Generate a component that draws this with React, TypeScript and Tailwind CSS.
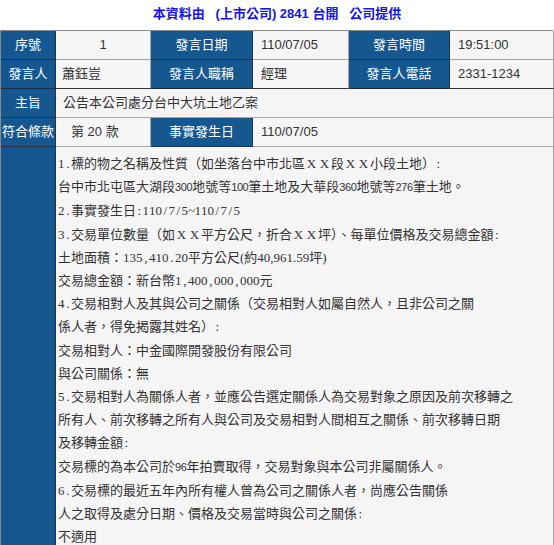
import React from "react";

const BLUE = "bg-[#17578f] text-white border-r border-b border-[#1d3550]";
const CELL = "bg-[#f5f5f5] text-[#333] border-r border-b border-[#a6a6a6]";

function X() {
  return <span className="inline-block w-[13px] text-center" style={{ fontFamily: '"Liberation Serif", serif' }}>X</span>;
}

function N({ children }: { children: React.ReactNode }) {
  return <span className="text-[11px] tracking-[-0.4px]" style={{ fontFamily: '"Liberation Sans", sans-serif' }}>{children}</span>;
}

function M({ s }: { s: string }) {
  const out: React.ReactNode[] = [];
  let buf = "";
  const flush = (k: number) => {
    if (buf) {
      out.push(<span key={"t" + k}>{buf}</span>);
      buf = "";
    }
  };
  Array.from(s).forEach((ch, i) => {
    if (ch.charCodeAt(0) < 128) {
      flush(i);
      out.push(
        <span key={i} className="inline-block w-[6.5px] text-center" style={{ fontFamily: '"Liberation Serif", serif' }}>
          {ch === " " ? "\u00a0" : ch}
        </span>
      );
    } else {
      buf += ch;
    }
  });
  flush(s.length + 1);
  return <>{out}</>;
}

export default function App() {
  const sans = '"Liberation Sans", "Noto Sans CJK TC", sans-serif';
  const body = '"Liberation Serif", "Noto Sans CJK TC", serif';
  const lines: React.ReactNode[] = [
    <><M s="1." />標的物之名稱及性質（如坐落台中市北區<X /><X />段<X /><X />小段土地）<M s=":" /></>,
    <>台中市北屯區大湖段<N>300</N>地號等<N>100</N>筆土地及大華段<N>360</N>地號等<N>276</N>筆土地。</>,
    <M s="2.事實發生日:110/7/5~110/7/5" />,
    <><M s="3." />交易單位數量（如<X /><X />平方公尺，折合<X /><X />坪）、每單位價格及交易總金額<M s=":" /></>,
    <><M s="土地面積：135,410.20平方公尺" />(約40,961.59坪)</>,
    <M s="交易總金額：新台幣1,400,000,000元" />,
    <M s="4.交易相對人及其與公司之關係（交易相對人如屬自然人，且非公司之關" />,
    <M s="係人者，得免揭露其姓名）:" />,
    <>交易相對人：中金國際開發股份有限公司</>,
    <>與公司關係：無</>,
    <M s="5.交易相對人為關係人者，並應公告選定關係人為交易對象之原因及前次移轉之" />,
    <>所有人、前次移轉之所有人與公司及交易相對人間相互之關係、前次移轉日期</>,
    <M s="及移轉金額:" />,
    <>交易標的為本公司於<N>96</N>年拍賣取得，交易對象與本公司非屬關係人。</>,
    <M s="6.交易標的最近五年內所有權人曾為公司之關係人者，尚應公告關係" />,
    <M s="人之取得及處分日期、價格及交易當時與公司之關係:" />,
    <>不適用</>,
  ];
  return (
    <div className="w-[554px] bg-white text-[13px]" style={{ fontFamily: sans }}>
      <div className="h-[30px] flex items-center justify-center font-bold text-[#1414e6] whitespace-pre pb-[2px]">
        本資料由{"   "}(上市公司) 2841 台開{"   "}公司提供
      </div>
      <div className="w-[553px] grid grid-cols-[55px_95px_102px_96px_101px_104px] grid-rows-[29px_29px_29px_29px_auto] border-t border-l border-[#8a8a8a]">
        <div className={`${BLUE} flex items-center justify-center`}>序號</div>
        <div className={`${CELL} flex items-center justify-center`}>1</div>
        <div className={`${BLUE} flex items-center justify-center`}>發言日期</div>
        <div className={`${CELL} flex items-center pl-[8px]`}>110/07/05</div>
        <div className={`${BLUE} flex items-center justify-center`}>發言時間</div>
        <div className={`${CELL} flex items-center pl-[8px]`}>19:51:00</div>

        <div className={`${BLUE} flex items-center justify-center border-b-[#1a2a3a]`}>發言人</div>
        <div className={`${CELL} flex items-center pl-[6px] border-b-[#333]`}>蕭鈺豈</div>
        <div className={`${BLUE} flex items-center justify-center border-b-[#1a2a3a]`}>發言人職稱</div>
        <div className={`${CELL} flex items-center pl-[8px] border-b-[#333]`}>經理</div>
        <div className={`${BLUE} flex items-center justify-center border-b-[#1a2a3a]`}>發言人電話</div>
        <div className={`${CELL} flex items-center pl-[8px] border-b-[#333]`}>2331-1234</div>

        <div className={`${BLUE} flex items-center justify-center`}>主旨</div>
        <div className={`${CELL} col-span-5 flex items-center pl-[7px]`}>公告本公司處分台中大坑土地乙案</div>

        <div className={`${BLUE} flex items-center justify-center`}>符合條款</div>
        <div className={`${CELL} flex items-center pl-[15px]`}>第 20 款</div>
        <div className={`${BLUE} flex items-center justify-center`}>事實發生日</div>
        <div className={`${CELL} col-span-3 flex items-center pl-[8px]`}>110/07/05</div>

        <div className={BLUE} />
        <div
          className={`${CELL} col-span-5 pl-[2px] pt-[5px] pb-[10px] text-[13px] text-[#5a5a5a] leading-[23.2px]`}
          style={{ fontFamily: body }}
        >
          {lines.map((l, i) => (
            <div key={i} className="whitespace-nowrap">{l}</div>
          ))}
        </div>
      </div>
    </div>
  );
}
